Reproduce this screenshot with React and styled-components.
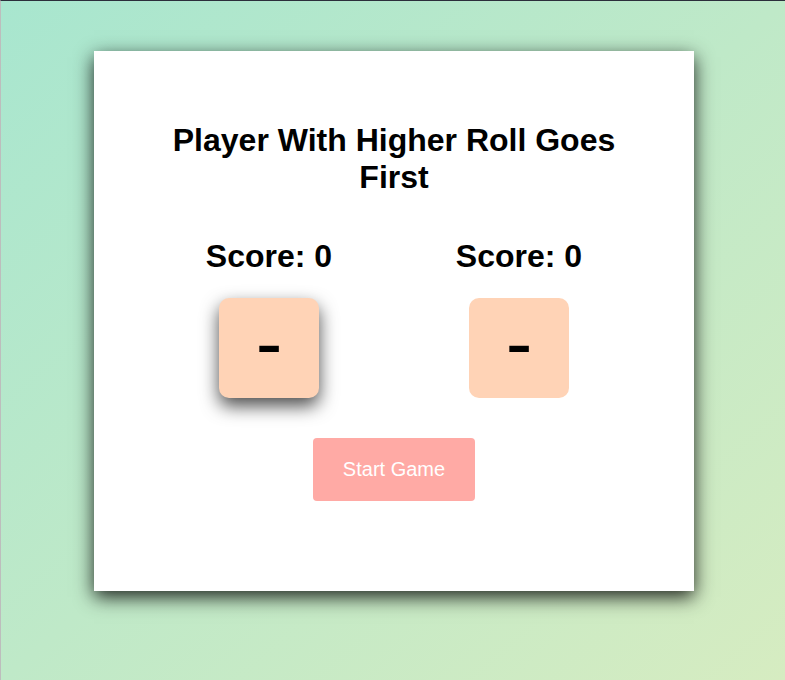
import React, { useState } from "react";
import styled, { createGlobalStyle } from "styled-components";

const GlobalStyle = createGlobalStyle`
  * {
    box-sizing: border-box;
  }
  body {
    margin: 0;
    font-family: "Liberation Sans", Arial, sans-serif;
  }
`;

function Die({ value, active }) {
  return <StDie $active={active}>{value}</StDie>;
}

function App() {
  const [scores] = useState([0, 0]);
  const [turn] = useState(0);

  return (
    <>
      <GlobalStyle />
      <StPage>
        <StCard>
          <StTitle>Player With Higher Roll Goes First</StTitle>
          <StPlayers>
            {scores.map((score, i) => (
              <StPlayer key={i}>
                <StScore>Score: {score}</StScore>
                <Die value="-" active={turn === i} />
              </StPlayer>
            ))}
          </StPlayers>
          <StBtn type="button">Start Game</StBtn>
        </StCard>
      </StPage>
    </>
  );
}

export default App;

const StPage = styled.div`
  min-height: 100vh;
  padding: 50px 0 0 2px;
  border-top: 1px solid #2b2e3b;
  border-left: 1px solid #bdbdbd;
  background: linear-gradient(to bottom right, #a8e6cf, #d6ecc1);
`;

const StCard = styled.div`
  width: 600px;
  height: 540px;
  margin: 0 auto;
  padding: 50px;
  background-color: #fff;
  box-shadow: 0 6px 18px rgba(0, 0, 0, 0.85);
  display: flex;
  flex-direction: column;
  align-items: center;
`;

const StTitle = styled.h1`
  margin: 21px 0;
  font-size: 32px;
  font-weight: bold;
  text-align: center;
  color: #000;
`;

const StPlayers = styled.div`
  width: 100%;
  display: flex;
  justify-content: space-around;
`;

const StPlayer = styled.div`
  display: flex;
  flex-direction: column;
  align-items: center;
`;

const StScore = styled.h2`
  margin: 21px 0 23px;
  font-size: 32px;
  font-weight: bold;
  color: #000;
`;

const StDie = styled.div`
  width: 100px;
  height: 100px;
  padding-bottom: 11px;
  border-radius: 10px;
  background-color: #ffd3b6;
  display: flex;
  justify-content: center;
  align-items: center;
  font-size: 80px;
  font-weight: normal;
  line-height: 1;
  color: #000;
  box-shadow: ${({ $active }) =>
    $active ? "0 8px 18px rgba(0, 0, 0, 0.7)" : "none"};
`;

const StBtn = styled.button`
  margin-top: 40px;
  padding: 20px 30px;
  border: none;
  border-radius: 4px;
  background-color: #ffaaa5;
  color: #fff;
  font-family: "Liberation Sans", Arial, sans-serif;
  font-size: 20px;
  cursor: pointer;
`;
